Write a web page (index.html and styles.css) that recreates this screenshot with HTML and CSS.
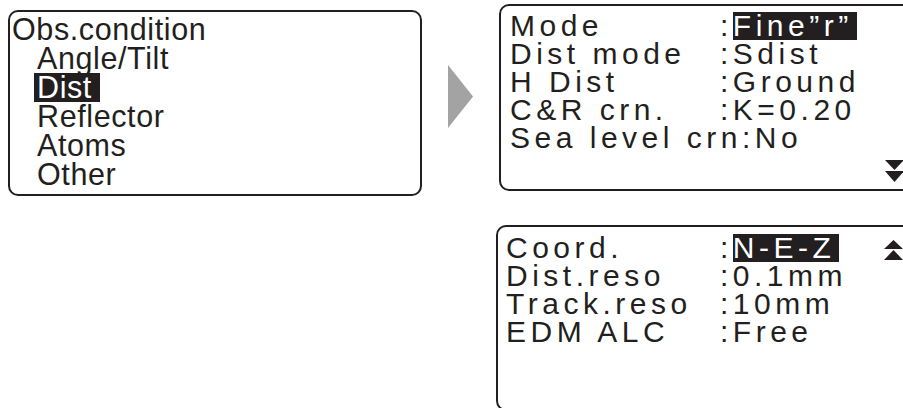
FILE: index.html
```html
<!DOCTYPE html>
<html lang="en">
<head>
<meta charset="utf-8">
<title>Obs.condition - Dist</title>
<link rel="stylesheet" href="styles.css">
</head>
<body>
<div class="page">
  <section class="screen screen--menu">
    <div class="title">Obs.condition</div>
    <ul class="menu">
      <li>Angle/Tilt</li>
      <li><span class="sel">Dist</span></li>
      <li>Reflector</li>
      <li>Atoms</li>
      <li>Other</li>
    </ul>
  </section>
  <div class="arrow">
    <svg width="25" height="63" viewBox="0 0 25 63"><polygon points="0,0 25,31.5 0,63" fill="#a3a3a3"/></svg>
  </div>
  <div class="right">
    <section class="screen screen--p1">
      <div class="rows">
        <span>Mode</span><span>:<span class="sel">Fine”r”</span></span>
        <span>Dist mode</span><span>:Sdist</span>
        <span>H Dist</span><span>:Ground</span>
        <span>C&amp;R crn.</span><span>:K=0.20</span>
        <span class="full">Sea level crn:No</span>
      </div>
      <svg class="scroll scroll--down" width="19" height="22" viewBox="0 0 19 22">
        <polygon points="0,0 19,0 9.5,10" fill="#231f20"/>
        <polygon points="0,11 19,11 9.5,22" fill="#231f20"/>
      </svg>
    </section>
    <section class="screen screen--p2">
      <div class="rows">
        <span>Coord.</span><span>:<span class="sel">N-E-Z</span></span>
        <span>Dist.reso</span><span>:0.1mm</span>
        <span>Track.reso</span><span>:10mm</span>
        <span>EDM ALC</span><span>:Free</span>
      </div>
      <svg class="scroll scroll--up" width="19" height="20" viewBox="0 0 19 20">
        <polygon points="9.5,0 19,9 0,9" fill="#231f20"/>
        <polygon points="9.5,10 19,20 0,20" fill="#231f20"/>
      </svg>
    </section>
  </div>
</div>
</body>
</html>
```
FILE: styles.css
```css
html, body {
  margin: 0;
  padding: 0;
  background: #ffffff;
}
body {
  overflow: hidden;
  font-family: "Liberation Sans", Arial, sans-serif;
  color: #231f20;
}
.page {
  display: flex;
  align-items: flex-start;
  padding-left: 8px;
  width: 1000px;
}
.screen {
  position: relative;
  flex-shrink: 0;
  box-sizing: border-box;
  border: 2px solid #231f20;
  border-radius: 10px;
  background: #ffffff;
}
.screen--menu {
  width: 414px;
  height: 186px;
  margin-top: 10px;
  padding: 3px 0 0 2px;
  font-size: 30.5px;
  line-height: 29px;
  letter-spacing: 0.6px;
}
.menu {
  list-style: none;
  margin: 0;
  padding: 0 0 0 25px;
}
.sel {
  display: inline-block;
  background: #231f20;
  color: #ffffff;
}
.menu .sel {
  padding: 0 8px 0 3px;
  margin-left: -3px;
}
.arrow {
  display: flex;
  flex-shrink: 0;
  margin: 65px 0 0 26px;
}
.right {
  display: flex;
  flex-direction: column;
  flex-shrink: 0;
  gap: 34px;
  margin: 4px 0 0 26px;
}
.screen--p1 {
  width: 430px;
  height: 187px;
  padding: 6px 0 0 9px;
}
.screen--p2 {
  width: 433px;
  height: 186px;
  margin-left: -3px;
  padding: 7px 0 0 8px;
}
.rows {
  display: grid;
  font-size: 30px;
  line-height: 28px;
  letter-spacing: 4.5px;
  white-space: nowrap;
}
.screen--p1 .rows {
  grid-template-columns: 210px auto;
}
.screen--p2 .rows {
  grid-template-columns: 214px auto;
}
.rows .sel {
  padding-right: 4px;
}
.full {
  grid-column: 1 / -1;
}
.scroll {
  position: absolute;
  display: block;
}
.scroll--down {
  left: 384px;
  top: 154px;
}
.scroll--up {
  left: 386px;
  top: 13px;
}
```
